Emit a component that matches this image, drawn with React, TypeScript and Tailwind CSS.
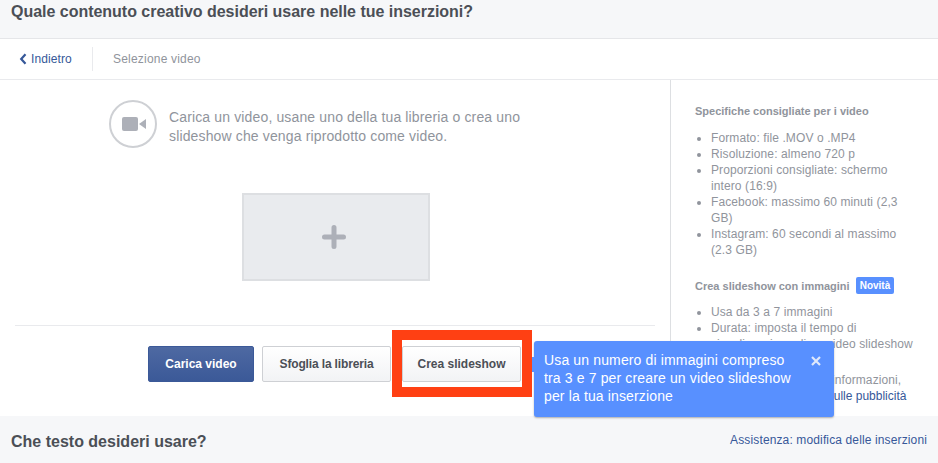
export default function App() {
  return (
    <div className="relative w-[938px] h-[463px] overflow-hidden bg-white font-['Liberation_Sans',Arial,sans-serif]">
      <div className="h-[39px] bg-[#f6f7f9] border-b border-[#e5e6e9] pl-[11px] pt-[2px]">
        <h2 className="text-[16px] leading-[20px] font-bold text-[#4b4f56] tracking-[-0.02px]">Quale contenuto creativo desideri usare nelle tue inserzioni?</h2>
      </div>
      <div className="h-[41px] border-b border-[#e9eaed] flex items-center pl-[19px] text-[12px]">
        <a className="flex items-center gap-[3px] w-[73px] text-[#365899] tracking-[0.1px]">
          <svg width="9" height="12" viewBox="0 0 9 12"><path d="M6.5 1.2 L2.2 6 L6.5 10.8" fill="none" stroke="#365899" strokeWidth="2.2" /></svg>
          Indietro
        </a>
        <div className="w-px h-6 bg-[#e9eaed]" />
        <span className="ml-5 text-[#90949c] tracking-[0.2px]">Selezione video</span>
      </div>
      <div className="flex h-[336px]">
        <div className="w-[671px] border-r border-[#dddfe2] px-[15px] flex flex-col">
          <div className="flex pl-[94px] pt-[20px] h-[113px]">
            <div className="w-[48px] h-[48px] rounded-full border-2 border-[#ced0d4] flex items-center justify-center">
              <svg className="ml-[2px]" width="24" height="14" viewBox="0 0 24 14">
                <rect x="0" y="0" width="16" height="14" rx="2" fill="#adb0b8" />
                <path d="M24 2 V12 L17 7 Z" fill="#adb0b8" />
              </svg>
            </div>
            <p className="ml-[12px] mt-[8px] text-[14px] leading-[19px] tracking-[0.14px] text-[#90949c] w-[370px]">
              Carica un video, usane uno della tua libreria o crea uno slideshow che venga riprodotto come video.
            </p>
          </div>
          <div className="ml-[227px] w-[188px] h-[88px] bg-[#e9ebee] border-2 border-[#dddfe2] flex items-center justify-center">
            <svg className="-ml-[4px]" width="24" height="24" viewBox="0 0 24 24">
              <path d="M12 2.5 V21.5 M2.5 12 H21.5" stroke="#adb0b8" strokeWidth="5" strokeLinecap="round" />
            </svg>
          </div>
          <div className="mt-[44px] border-t border-[#e9eaed] flex justify-end gap-[8px] pt-[20px] pr-[134px] text-[12px] font-bold">
            <button className="w-[106px] h-[36px] rounded-[2px] border border-[#3b5998] bg-gradient-to-b from-[#4e69a2] to-[#3b5998] text-white">Carica video</button>
            <button className="w-[129px] h-[36px] mr-[3px] rounded-[2px] border border-[#ced0d4] bg-gradient-to-b from-white to-[#f2f3f5] text-[#4b4f56] tracking-[-0.15px]">Sfoglia la libreria</button>
            <button className="w-[119px] h-[36px] rounded-[2px] border border-[#ced0d4] bg-gradient-to-b from-white to-[#f2f3f5] text-[#4b4f56]">Crea slideshow</button>
          </div>
        </div>
        <div className="flex-1 pl-[24px] pr-[23px] pt-[24px] text-[12px] leading-[16px] tracking-[0.1px] text-[#90949c]">
          <h3 className="text-[11px] font-bold leading-[14px] tracking-normal">Specifiche consigliate per i video</h3>
          <ul className="mt-[12px] list-disc pl-[16px]">
            <li>Formato: file .MOV o .MP4</li>
            <li>Risoluzione: almeno 720 p</li>
            <li>Proporzioni consigliate: schermo intero (16:9)</li>
            <li>Facebook: massimo 60 minuti (2,3 GB)</li>
            <li>Instagram: 60 secondi al massimo (2.3 GB)</li>
          </ul>
          <div className="mt-[19px] flex items-center gap-[6px]">
            <h3 className="text-[11px] font-bold leading-[14px] tracking-normal">Crea slideshow con immagini</h3>
            <span className="h-[17px] px-[4px] rounded-[2px] bg-[#5890ff] text-white text-[10px] font-bold leading-[17px] tracking-normal">Novità</span>
          </div>
          <ul className="mt-[10px] list-disc pl-[16px]">
            <li>Usa da 3 a 7 immagini</li>
            <li>Durata: imposta il tempo di visualizzazione di un video slideshow</li>
          </ul>
          <p className="mt-[20px] pl-[16px]">Per ottenere maggiori informazioni, <a className="text-[#365899] tracking-normal">consulta la normativa sulle pubblicità</a></p>
        </div>
      </div>
      <div className="h-[47px] bg-[#f6f7f9] flex items-center justify-between pl-[11px] pr-[11px]">
        <h2 className="text-[16px] font-bold text-[#4b4f56] mt-[4px]">Che testo desideri usare?</h2>
        <a className="text-[12px] text-[#365899] tracking-[0.13px] mt-[1px]">Assistenza: modifica delle inserzioni</a>
      </div>
      {/* highlight + tooltip sit over the page */}
      <div className="absolute left-[392px] top-[330px] w-[140px] h-[67px] border-[10px] border-[#ff4013]" />
      <div className="absolute left-[534px] top-[341px] w-[300px] h-[76px] rounded-[3px] bg-[#5890ff] shadow-[0_1px_2px_rgba(0,0,0,0.3)] pl-[10px] pt-[10px] text-[14px] leading-[18px] tracking-[0.14px] text-white">
        <p className="w-[255px]">Usa un numero di immagini compreso tra 3 e 7 per creare un video slideshow per la tua inserzione</p>
        <div className="absolute left-[-2px] top-[16px] w-[2px] h-[15px] bg-[#5890ff]" />
        <svg className="absolute right-[13px] top-[15px]" width="10" height="10" viewBox="0 0 10 10">
          <path d="M1 1 L9 9 M9 1 L1 9" stroke="#dfe8fb" strokeWidth="2.2" />
        </svg>
      </div>
    </div>
  );
}
